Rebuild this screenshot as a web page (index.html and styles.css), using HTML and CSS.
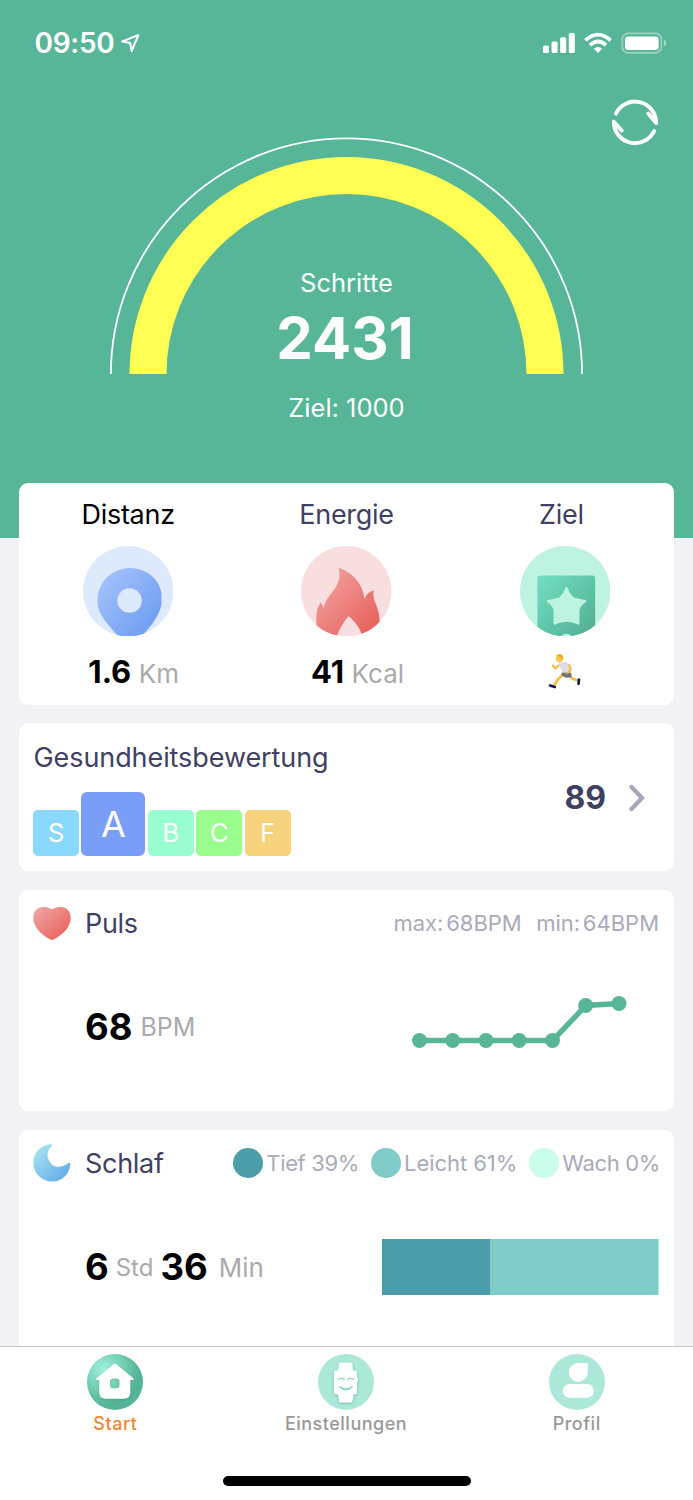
FILE: index.html
```
<!DOCTYPE html>
<html lang="de">
<head>
    <meta charset="UTF-8">
    <meta name="viewport" content="width=device-width, initial-scale=1.0">
    <title>Start</title>
    <link rel="stylesheet" href="styles.css">
</head>
<body>
    <div class="app">
        <header class="hero">
            <!-- Statusleiste -->
            <div class="status">
                <span class="time">09:50</span>
                <svg class="arrow" width="20" height="20" viewBox="0 0 20 20">
                    <path d="M2 8.6 18.4 2 11.6 18.2 10.2 10Z" fill="none" stroke="#fff" stroke-width="2" stroke-linejoin="round"/>
                </svg>
                <svg class="status-icons" width="124" height="22" viewBox="0 0 124 22">
                    <g fill="#fff">
                        <rect x="0" y="13.5" width="6" height="7.5" rx="1.6"/>
                        <rect x="8.6" y="9.6" width="6" height="11.4" rx="1.6"/>
                        <rect x="17.2" y="5.2" width="6" height="15.8" rx="1.6"/>
                        <rect x="25.8" y="1" width="6" height="20" rx="1.6"/>
                        <path d="M55 20.9 50.8 16.6Q55 13.2 59.2 16.6Z"/>
                        <rect x="82" y="4.6" width="33.6" height="13.4" rx="3"/>
                        <path d="M121 7.5Q123.4 8.5 123.4 11T121 14.5Z" opacity=".45"/>
                    </g>
                    <path d="M42.4 8.4Q55 -3.2 67.6 8.4M47 13.2Q55 5.8 63 13.2" fill="none" stroke="#fff" stroke-width="3.7"/>
                    <rect x="79.3" y="1.3" width="39.2" height="19.6" rx="6" fill="none" stroke="#fff" stroke-width="1.7" opacity=".4"/>
                </svg>
            </div>

            <div class="toolbar">
                <svg width="48" height="48" viewBox="0 0 48 48" fill="none" stroke="#fff" stroke-width="3.9" stroke-linecap="round" stroke-linejoin="round">
                    <path d="M4.9 15.6A21.2 21.2 0 0 1 45.2 25L37.3 15.5"/>
                    <path d="M43.1 33.1A21.2 21.2 0 0 1 2.8 23.7L10.7 32.5"/>
                </svg>
            </div>

            <!-- Schritte -->
            <svg class="gauge" width="473" height="237" viewBox="0.5 0 473 237" fill="none">
                <path d="M1.4 237A235.6 235.6 0 0 1 472.6 237" stroke="#fff" stroke-width="1.8"/>
                <path d="M38.5 237A198.5 198.5 0 0 1 435.5 237" stroke="#ffff54" stroke-width="37"/>
            </svg>
            <div class="steps">
                <div class="steps-label">Schritte</div>
                <div class="steps-value">2431</div>
                <div class="steps-goal">Ziel: 1000</div>
            </div>
        </header>

        <main class="cards">
            <section class="card summary">
                <div class="metric">
                    <h2 class="black">Distanz</h2>
                    <svg class="badge" viewBox="0 0 90 90">
                        <defs>
                            <linearGradient id="blue" x1="0" y1="0" x2="1" y2="1">
                                <stop offset="0" stop-color="#abc5fb"/>
                                <stop offset="1" stop-color="#6096f0"/>
                            </linearGradient>
                            <clipPath id="disc"><circle cx="45" cy="45" r="45"/></clipPath>
                        </defs>
                        <circle cx="45" cy="45" r="45" fill="#ddeafc"/>
                        <path clip-path="url(#disc)" fill="url(#blue)" d="M46 22C63 22 76 33 78 47V58C76 70 67 80 59 89.5L50 100H44L34.5 89.5C25 77 14.3 69 14.3 54A31.9 31.9 0 0 1 46 22Z"/>
                        <circle cx="46.3" cy="54.3" r="12.2" fill="#ddeafc"/>
                    </svg>
                    <p class="value km"><b>1.6</b><span>Km</span></p>
                </div>
                <div class="metric">
                    <h2>Energie</h2>
                    <svg class="badge" viewBox="0 0 90 90">
                        <defs>
                            <linearGradient id="red" x1="0" y1="0" x2="1" y2="1">
                                <stop offset="0" stop-color="#f2a8a6"/>
                                <stop offset="1" stop-color="#e65a55"/>
                            </linearGradient>
                        </defs>
                        <circle cx="45" cy="45" r="45" fill="#f9dedf"/>
                        <path clip-path="url(#disc)" fill="url(#red)" d="M37.5 22C51 26 62 38 63 52.7C65 48 68 45 72.5 44C70 54 78 60 78 73V90H61C58 80 54 76 47.3 69.7C42 76 38 83 35.5 90H15.3V70C15.5 64 17 60 19.7 56L22.7 61.7C25 47 42 42 37.5 22Z"/>
                    </svg>
                    <p class="value kcal"><b>41</b><span>Kcal</span></p>
                </div>
                <div class="metric">
                    <h2 class="goal">Ziel</h2>
                    <svg class="badge" viewBox="0 0 90 90">
                        <defs>
                            <linearGradient id="green" x1="0" y1="0" x2="1" y2="1">
                                <stop offset="0" stop-color="#72e0c0"/>
                                <stop offset="1" stop-color="#50ab92"/>
                            </linearGradient>
                        </defs>
                        <circle cx="45" cy="45" r="45" fill="#bdf3e0"/>
                        <rect clip-path="url(#disc)" x="17.3" y="29.3" width="57.4" height="62" rx="3" fill="url(#green)"/>
                        <path d="M46.3 41.5Q48.5 48 52.5 51.8Q58 53.5 65 54.8Q58.5 59 58.2 64.5V77.2Q46.3 71.5 34.4 77.2V64.5Q34 59 27.6 54.8Q34.5 53.5 40 51.8Q44 48 46.3 41.5Z" fill="#bdf3e0" stroke="#bdf3e0" stroke-width="2" stroke-linejoin="round"/>
                        <path d="M40.5 90A7 7 0 0 1 51.5 90Z" fill="#bdf3e0"/>
                    </svg>
                    <!-- Läufer -->
                    <svg class="runner" width="34" height="36" viewBox="0 0 34 36" fill="none" stroke-linecap="round" stroke-linejoin="round">
                        <path d="M17 20 10.5 25.5 6.5 32" stroke="#f5b93c" stroke-width="2.6"/>
                        <path d="M19 20 24 25.5 30.5 27.5" stroke="#f5b93c" stroke-width="2.6"/>
                        <path d="M2 32.5 6.8 34M31 26.5 30.5 31" stroke="#131a5c" stroke-width="2.6"/>
                        <path d="M15.5 19 22.5 20.5 23 23.5 18 24 14 21.5Z" fill="#737377" stroke="#737377" stroke-width="1.5"/>
                        <path d="M12 11 17.5 10 20.5 12 20.5 18.5 15.5 18.5Z" fill="#dcdce2" stroke="#dcdce2" stroke-width="2.5"/>
                        <path d="M10.5 12.5 7.5 15.5 5 12.5M21.5 12 22.8 17 19.5 20" stroke="#f5b93c" stroke-width="2"/>
                        <ellipse cx="11.5" cy="5.2" rx="3.6" ry="4.3" fill="#fbc94c"/>
                        <path d="M8 3Q12 -.5 15 3Q15.5 6 14 7Q12.5 3 8 3Z" fill="#e9ac22"/>
                    </svg>
                </div>
            </section>

            <section class="card rating">
                <div>
                    <h2 class="rating-title">Gesundheitsbewertung</h2>
                    <div class="grades">
                        <span class="grade s">S</span>
                        <span class="grade a">A</span>
                        <span class="grade b">B</span>
                        <span class="grade c">C</span>
                        <span class="grade f">F</span>
                    </div>
                </div>
                <div class="score">
                    <b>89</b>
                    <svg width="18" height="28" viewBox="0 0 18 28">
                        <path d="M3.5 3 14 14 3.5 25" fill="none" stroke="#a6a7b8" stroke-width="4.3" stroke-linecap="round"/>
                    </svg>
                </div>
            </section>

            <section class="card">
                <div class="card-head">
                    <svg width="38" height="33" viewBox="0 0 38 33">
                        <path fill="url(#red)" d="M19 2.6C22 .6 25 0 27.5 0C34 0 37.7 4.5 37.7 11C37.7 21 28 29 20.5 32.4Q19 33 17.5 32.4C10 29 .3 21 .3 11C.3 4.5 4 0 10.5 0C13 0 16 .6 19 2.6Z"/>
                    </svg>
                    <h2>Puls</h2>
                    <div class="range"><span>max: 68BPM</span><span>min: 64BPM</span></div>
                </div>
                <div class="card-body">
                    <p class="reading"><b>68</b><span class="bpm">BPM</span></p>
                    <svg class="pulse" width="216" height="54" viewBox="0 0 216 54">
                        <path d="M8.5 45.5H141.5L175 10.5 208 8.5" fill="none" stroke="#56b697" stroke-width="5.4"/>
                        <g fill="#56b697">
                            <circle cx="8.5" cy="45.5" r="7.5"/>
                            <circle cx="41.7" cy="45.5" r="7.5"/>
                            <circle cx="75" cy="45.5" r="7.5"/>
                            <circle cx="108.2" cy="45.5" r="7.5"/>
                            <circle cx="141.5" cy="45.5" r="7.5"/>
                            <circle cx="174.7" cy="10.5" r="7.5"/>
                            <circle cx="208" cy="8.5" r="7.5"/>
                        </g>
                    </svg>
                </div>
            </section>

            <section class="card sleep">
                <div class="card-head">
                    <svg width="38" height="38" viewBox="0 0 38 38">
                        <defs>
                            <linearGradient id="night" x1="0" y1="0" x2="1" y2="1">
                                <stop offset=".1" stop-color="#a3e4ef"/>
                                <stop offset=".9" stop-color="#64a9e8"/>
                            </linearGradient>
                        </defs>
                        <path fill="url(#night)" d="M17.5 .3Q20 .2 18.6 2.2C14 6 13.8 12 16 16.5C19.5 24 28 24.5 34.5 19.6Q37.6 17.5 37.5 20.3C36.5 30 29 37.6 19.5 37.6C9 37.6 .3 29.5 .3 19C.3 8.5 8 1 17.5 .3Z"/>
                    </svg>
                    <h2>Schlaf</h2>
                    <ul class="legend">
                        <li class="deep">Tief 39%</li>
                        <li class="light">Leicht 61%</li>
                        <li class="awake">Wach 0%</li>
                    </ul>
                </div>
                <div class="card-body">
                    <p class="reading"><b>6</b><span class="std">Std</span><b>36</b><span class="minutes">Min</span></p>
                    <div class="phases">
                        <div class="phase-deep" style="width: 39%"></div>
                        <div class="phase-light" style="width: 61%"></div>
                    </div>
                </div>
            </section>
        </main>

        <nav class="tabs">
            <a class="tab active">
                <svg width="56" height="56" viewBox="0 0 56 56">
                    <defs>
                        <radialGradient id="home" cx=".3" cy=".28" r=".62">
                            <stop offset="0" stop-color="#a0f3dd"/>
                            <stop offset="1" stop-color="#55b497"/>
                        </radialGradient>
                    </defs>
                    <circle cx="28" cy="28" r="28" fill="url(#home)"/>
                    <path class="raised" fill="#fff" fill-rule="evenodd" d="M26.5 10.2Q28 9 29.5 10.2L46.7 24.4Q47.5 26 45.5 26H43.3V38.5Q43.3 44.7 37 44.7H18.5Q12.2 44.7 12.2 38.5V26H10Q8.2 26 9.2 24.4ZM26.5 24.5Q23 24.5 23 28V30.8Q23 34.3 26.5 34.3H29Q32.5 34.3 32.5 30.8V28Q32.5 24.5 29 24.5Z"/>
                </svg>
                Start
            </a>
            <a class="tab">
                <svg width="56" height="56" viewBox="0 0 56 56">
                    <circle cx="28" cy="28" r="28" fill="#abe8d9"/>
                    <path class="raised" fill="#fff" d="M22.5 8.5H32.5Q33.8 8.5 34.2 10L35 16.5H37Q39 16.5 39 18.5V23.3L39.9 24V27L39 27.7V38.5Q39 40.5 37 40.5H35.5L34.5 47Q34.2 48.5 33 48.5H22.5Q21.3 48.5 21 47L20 40.5H18Q16 40.5 16 38.5V18.5Q16 16.5 18 16.5H20L20.9 10Q21.2 8.5 22.5 8.5Z"/>
                    <g fill="none" stroke="#7fd6be" stroke-linecap="round">
                        <path d="M20.5 25.5Q23.4 23 26.3 25.5M29.5 25.5Q32.4 23 35.3 25.5" stroke-width="1.1"/>
                        <path d="M22 32.8Q28 38 34 32.8" stroke-width="1.7"/>
                    </g>
                </svg>
                Einstellungen
            </a>
            <a class="tab">
                <svg width="56" height="56" viewBox="0 0 56 56">
                    <circle cx="28" cy="28" r="28" fill="#abe8d9"/>
                    <path fill="#fff" d="M29.3 8.9H38.8V18.5A9.5 9.5 0 1 1 29.3 8.9Z"/>
                    <rect x="13.8" y="30" width="31" height="13.7" rx="6.5" fill="#fff"/>
                </svg>
                Profil
            </a>
        </nav>
        <div class="home-bar"></div>
    </div>
</body>
</html>
```
FILE: styles.css
```
* {
    box-sizing: border-box;
}
body {
    margin: 0;
    font-family: Inter, "Liberation Sans", sans-serif;
    background-color: #f2f1f6;
    color: #3f4162;
}
h2, p, ul {
    margin: 0;
    padding: 0;
}
h2 {
    font-size: 27px;
    font-weight: 400;
    line-height: 32px;
    letter-spacing: -0.3px;
}
svg {
    display: block;
    flex-shrink: 0;
}
.app {
    width: 693px;
    height: 1500px;
    display: flex;
    flex-direction: column;
    overflow: hidden;
}

/* Kopfbereich */
.hero {
    height: 538px;
    flex-shrink: 0;
    background-color: #56b697;
    color: white;
    text-align: center;
}
.status {
    display: flex;
    align-items: center;
    height: 85px;
    padding: 0 26px 0 34.5px;
}
.time {
    font-size: 28px;
    font-weight: 600;
    letter-spacing: -0.3px;
}
.arrow {
    margin-left: 6px;
}
.status-icons {
    margin-left: auto;
}
.toolbar {
    display: flex;
    justify-content: flex-end;
    padding: 13px 34px 0 0;
}
.gauge {
    margin: -9px auto 0;
}
.steps {
    margin-top: -107px;
}
.steps-label, .steps-goal {
    font-size: 25.5px;
    line-height: 32px;
}
.steps-value {
    margin: 7px 3px 22px 0;
    font-size: 58px;
    font-weight: 700;
    line-height: 64px;
}

/* Karten */
.cards {
    display: flex;
    flex-direction: column;
    flex: 1;
    min-height: 0;
    gap: 18.5px;
    margin-top: -55px;
    padding: 0 19px;
    overflow: hidden;
}
.card {
    flex-shrink: 0;
    padding: 13.5px 15px 0 14px;
    background-color: white;
    border-radius: 9px;
}
.summary {
    display: grid;
    grid-template-columns: repeat(3, 1fr);
    height: 221.5px;
    padding: 16px 0 0;
}
.metric {
    display: flex;
    flex-direction: column;
    align-items: center;
}
.black {
    color: black;
}
.goal {
    margin-right: 7px;
}
.badge {
    width: 90.5px;
    height: 90.5px;
    margin-top: 14.7px;
}
.value {
    display: flex;
    align-items: baseline;
    margin-top: 17px;
    line-height: 38px;
    color: #aaa;
}
.value b {
    font-size: 31px;
    color: black;
}
.value span {
    margin-left: 7.5px;
    font-size: 26px;
}
.km {
    margin-left: 11px;
}
.kcal {
    margin-left: 22px;
}
.runner {
    margin-top: 17px;
}

.rating {
    display: flex;
    justify-content: space-between;
    height: 148px;
}
.rating-title {
    margin: 5.5px 0 0 0.5px;
    letter-spacing: -0.08px;
}
.grades {
    display: flex;
    align-items: flex-end;
    gap: 2.4px;
    margin-top: 17.5px;
}
.grade {
    width: 46px;
    height: 46px;
    border-radius: 5px;
    color: white;
    font-size: 26px;
    line-height: 46px;
    text-align: center;
}
.s { background-color: #8ad8fd; }
.a { background-color: #7a9ef8; }
.b { background-color: #98fdcf; }
.c { background-color: #98fd8c; }
.f { background-color: #f6d27d; }
.grade.a {
    width: 64px;
    height: 64px;
    border-radius: 6px;
    font-size: 36px;
    line-height: 65px;
}
.score {
    display: flex;
    align-items: center;
    gap: 22px;
    margin: -12px 13px 0 0;
}
.score b {
    font-size: 32px;
}

.card-head {
    display: flex;
    align-items: center;
    height: 40px;
}
.card-head h2 {
    margin-left: 14px;
    padding-top: 1px;
}
.card-body {
    display: flex;
    align-items: center;
    justify-content: space-between;
    height: 168px;
}
.range {
    display: flex;
    gap: 14.5px;
    margin-left: auto;
    font-size: 22px;
    word-spacing: -3.5px;
    color: #a9aaba;
}
.reading {
    display: flex;
    align-items: center;
    margin-left: 52px;
    color: #aaa;
}
.reading b {
    font-size: 36.5px;
    color: black;
}
.bpm {
    margin-left: 8px;
    font-size: 25px;
}
.std {
    margin: 0 7px;
    font-size: 24px;
}
.minutes {
    margin-left: 11px;
    font-size: 26px;
}
.pulse {
    margin: -11px 32px 0 0;
}
.legend {
    display: flex;
    gap: 12px;
    margin-right: -1px;
    margin-left: auto;
    list-style: none;
    font-size: 22px;
    letter-spacing: -0.35px;
    color: #a9aaba;
}
.legend li {
    display: flex;
    align-items: center;
    gap: 3px;
}
.legend .light {
    letter-spacing: -0.05px;
}
.legend li::before {
    content: "";
    width: 30px;
    height: 30px;
    border-radius: 50%;
}
.deep::before, .phase-deep {
    background-color: #4b9da9;
}
.light::before, .phase-light {
    background-color: #7fcbc7;
}
.awake::before {
    background-color: #c9fce9;
}
.phases {
    display: flex;
    width: 277px;
    height: 55.5px;
    border-right: 1px solid #a5efd8;
}
.sleep {
    height: 260px;
}

/* Navigation */
.tabs {
    display: flex;
    height: 130px;
    flex-shrink: 0;
    padding-right: 1px;
    border-top: 1px solid #c6c6c9;
    background-color: white;
}
.tab {
    flex: 1;
    display: flex;
    flex-direction: column;
    align-items: center;
    padding-top: 7px;
    font-size: 18px;
    font-weight: 500;
    line-height: 28px;
    letter-spacing: 0.5px;
    color: #999;
}
.active {
    color: #ef8532;
}
.raised {
    filter: drop-shadow(0 1px 1.5px rgba(30, 120, 95, 0.35));
}
.home-bar {
    height: 24px;
    flex-shrink: 0;
    background-color: white;
}
.home-bar::before {
    content: "";
    display: block;
    width: 248px;
    height: 9.5px;
    margin: 0 auto;
    border-radius: 5px;
    background-color: black;
}
```
